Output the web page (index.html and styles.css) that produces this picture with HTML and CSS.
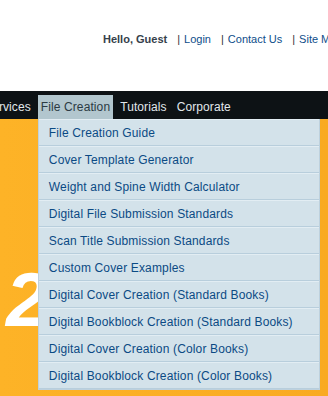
FILE: index.html
```html
<!DOCTYPE html>
<html lang="en">
<head>
    <meta charset="UTF-8">
    <title>File Creation</title>
    <link rel="stylesheet" href="styles.css">
</head>
<body>
    <div class="page">
        <div class="top">
            <span class="hello">Hello, Guest</span>
            <span class="sep">|</span><a href="#">Login</a>
            <span class="sep">|</span><a href="#">Contact Us</a>
            <span class="sep">|</span><a href="#">Site Map</a>
        </div>
        <ul class="nav">
            <li>Services</li>
            <li class="active">File Creation
                <ul class="drop">
                    <li><a href="#">File Creation Guide</a></li>
                    <li><a href="#">Cover Template Generator</a></li>
                    <li><a href="#">Weight and Spine Width Calculator</a></li>
                    <li><a href="#">Digital File Submission Standards</a></li>
                    <li><a href="#">Scan Title Submission Standards</a></li>
                    <li><a href="#">Custom Cover Examples</a></li>
                    <li><a href="#">Digital Cover Creation (Standard Books)</a></li>
                    <li><a href="#">Digital Bookblock Creation (Standard Books)</a></li>
                    <li><a href="#">Digital Cover Creation (Color Books)</a></li>
                    <li><a href="#">Digital Bookblock Creation (Color Books)</a></li>
                </ul>
            </li>
            <li>Tutorials</li>
            <li>Corporate</li>
        </ul>
        <div class="banner">
            <span class="big">2</span>
        </div>
    </div>
</body>
</html>
```

FILE: styles.css
```css
body {
    margin: 0;
    overflow: hidden;
    font-family: "Liberation Sans", Arial, sans-serif;
}
.page {
    width: 328px;
    height: 396px;
    overflow: hidden;
}
.top {
    height: 91px;
    box-sizing: border-box;
    padding: 33px 0 0 103px;
    font-size: 11px;
    line-height: 13px;
    white-space: nowrap;
    display: flex;
}
.top a {
    color: #0d4d8a;
    text-decoration: none;
}
.hello {
    font-weight: bold;
    color: #36414b;
}
.sep {
    color: #333;
    margin: 0 4px 0 10px;
}
.nav {
    display: flex;
    gap: 4px;
    list-style: none;
    margin: 0 0 0 -19px;
    padding: 4px 0 0;
    height: 28px;
    box-sizing: border-box;
    background: #0d1215;
    white-space: nowrap;
    position: relative;
    z-index: 2;
}
.nav > li {
    padding: 0 3px;
    line-height: 24px;
    font-size: 12px;
    letter-spacing: 0.1px;
    color: #e2e8ec;
    position: relative;
}
.nav > li.active {
    background: #b2c6ce;
    color: #2b3a43;
}
.drop {
    position: absolute;
    top: 24px;
    left: 0;
    width: 282px;
    box-sizing: border-box;
    margin: 0;
    padding: 0;
    list-style: none;
    background: #d3e2ea;
    border: 1px solid #bdd1de;
    border-top: 0;
}
.drop li {
    line-height: 23px;
    padding: 2px 0 0 10px;
    border-top: 1px solid #e2edf3;
    border-bottom: 1px solid #b8cedc;
}
.drop a {
    color: #0b4a84;
    text-decoration: none;
    font-size: 12px;
    letter-spacing: 0.15px;
}
.banner {
    height: 277px;
    background: linear-gradient(90deg, #fdb327, #f9aa22);
    position: relative;
    overflow: hidden;
}
.big {
    position: absolute;
    left: 6px;
    top: 143px;
    font-size: 76px;
    line-height: 1;
    font-weight: bold;
    font-style: italic;
    color: #fff;
}
```
